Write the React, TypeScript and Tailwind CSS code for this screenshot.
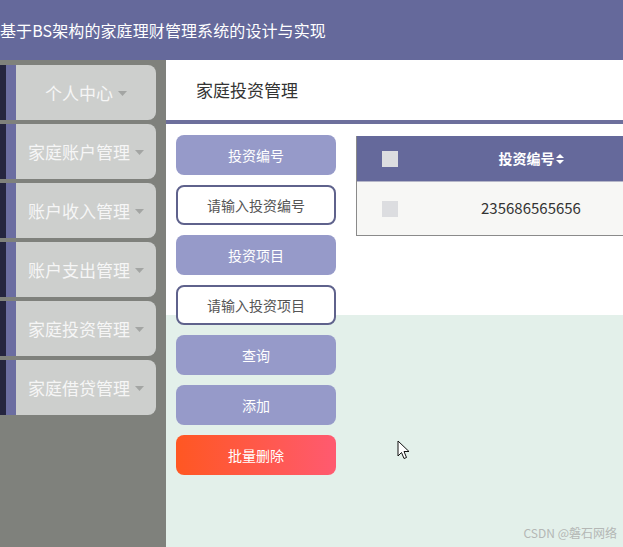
import { ReactNode } from 'react';

const menus = ['个人中心', '家庭账户管理', '账户收入管理', '账户支出管理', '家庭投资管理', '家庭借贷管理'];

const Caret = () => (
  <svg width="9" height="5" viewBox="0 0 9 5" className="ml-[5px] mt-[1px]">
    <path d="M0 0 L9 0 L4.5 5 Z" fill="#a3a5a3" />
  </svg>
);

const Btn = ({ children, danger }: { children: ReactNode; danger?: boolean }) => (
  <div
    className={
      'h-10 rounded-lg flex items-center justify-center text-[14px] text-white ' +
      (danger ? 'bg-[linear-gradient(to_right,#ff5722,#ff5a70)]' : 'bg-[#969ac9]')
    }
  >
    {children}
  </div>
);

const Field = ({ placeholder }: { placeholder: string }) => (
  <div className="h-10 rounded-lg border-2 border-[#5f628c] bg-white flex items-center justify-center text-[14px] text-[#555]">
    {placeholder}
  </div>
);

export default function App() {
  return (
    <div
      className="relative w-[623px] h-[547px] overflow-hidden"
      style={{ fontFamily: '"Noto Sans CJK SC", "Noto Sans", sans-serif' }}
    >
      {/* top header */}
      <header className="h-[60px] bg-[#65699b] flex items-center">
        <h1 className="text-[16px] text-white tracking-[0.1px]">基于BS架构的家庭理财管理系统的设计与实现</h1>
      </header>

      <div className="flex h-[487px]">
        {/* sidebar */}
        <aside className="w-[166px] bg-[#7f817c] pt-[5px] flex flex-col gap-1">
          {menus.map((m) => (
            <div key={m} className="flex h-[55px]">
              <div className="w-[6px] bg-[#25253f]" />
              <div className="w-[10px] bg-[#6b6da1]" />
              <div className="w-[140px] bg-[#cdcfcd] rounded-r-lg flex items-center justify-center text-[17px] text-[#f6f6f6]">
                {m}
                <Caret />
              </div>
            </div>
          ))}
        </aside>

        {/* main */}
        <main className="flex-1 flex flex-col overflow-hidden">
          <div className="h-[64px] bg-white border-b-4 border-[#6d6f9c] flex items-center pl-[30px] shrink-0">
            <span className="text-[17px] text-[#333]">家庭投资管理</span>
          </div>
          <div className="flex-1 flex pl-[10px] pt-[11px] bg-[linear-gradient(to_bottom,#ffffff_191px,#e3f0ea_191px)]">
            <div className="w-[160px] shrink-0 flex flex-col gap-[10px]">
              <Btn>投资编号</Btn>
              <Field placeholder="请输入投资编号" />
              <Btn>投资项目</Btn>
              <Field placeholder="请输入投资项目" />
              <Btn>查询</Btn>
              <Btn>添加</Btn>
              <Btn danger>批量删除</Btn>
            </div>

            <div className="ml-[20px] mt-[1px] shrink-0 w-[500px] self-start border-l border-b border-[#8a8a8a]">
              <div className="h-[45px] bg-[#65699b] flex items-center">
                <div className="w-[70px] flex pl-[25px]">
                  <div className="w-4 h-4 bg-[#dcdde0]" />
                </div>
                <div className="w-[208px] flex items-center justify-center text-[14px] font-bold text-white">
                  投资编号
                  <svg width="8" height="10" viewBox="0 0 8 10" className="ml-[1px]">
                    <path d="M0 4 L4 0 L8 4 Z M0 6 L8 6 L4 10 Z" fill="#ffffff" />
                  </svg>
                </div>
              </div>
              <div className="h-[54px] bg-[#f7f7f5] border-t border-[#b5b6c8] flex items-center">
                <div className="w-[70px] flex pl-[25px]">
                  <div className="w-4 h-4 bg-[#dcdde0]" />
                </div>
                <div className="w-[208px] text-center text-[15px] text-[#333]">235686565656</div>
              </div>
            </div>
          </div>
        </main>
      </div>

      {/* mouse pointer captured in screenshot */}
      <svg width="14" height="21" viewBox="0 0 14 21" className="absolute left-[397px] top-[440px]">
        <path d="M1 1 L1 16 L4.5 12.5 L7 18.5 L9.5 17.5 L7 11.5 L12 11.5 Z" fill="#ffffff" stroke="#111" strokeWidth="1" />
      </svg>

      <div className="absolute right-[6px] bottom-[5px] text-[12px] text-[#b4b7b5]">CSDN @磐石网络</div>
    </div>
  );
}
